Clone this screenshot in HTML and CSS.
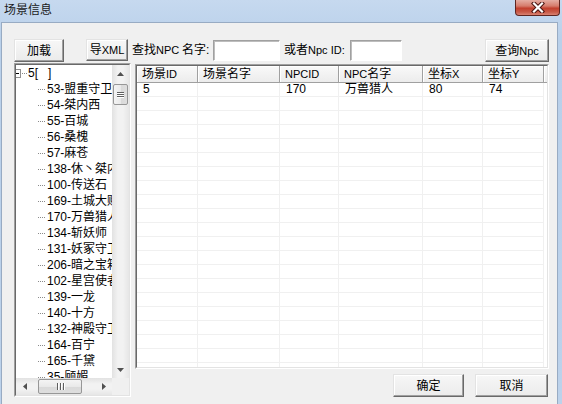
FILE: index.html
```html
<!DOCTYPE html>
<html lang="zh">
<head>
<meta charset="utf-8">
<title>场景信息</title>
<link rel="stylesheet" href="styles.css">
</head>
<body>
<div class="window">
  <div class="titlebar">
    <span class="title">场景信息</span>
    <div class="close">
      <svg width="14" height="11" viewBox="0 0 14 11">
        <path d="M3 1.5 L11 9.5 M11 1.5 L3 9.5" stroke="#4a1410" stroke-width="4.2" stroke-linecap="square"/>
        <path d="M3 1.5 L11 9.5 M11 1.5 L3 9.5" stroke="#ffffff" stroke-width="2.2" stroke-linecap="square"/>
      </svg>
    </div>
  </div>
  <div class="client">
    <div class="toolbar">
      <button class="btn btn-load">加载</button>
      <button class="btn btn-xml">导<span class="lat">XML</span></button>
      <span class="lbl lbl-find">查找<span class="lat">NPC</span></span>
      <span class="lbl lbl-name">名字:</span>
      <span class="input input-name"></span>
      <span class="lbl lbl-id">或者<span class="lat">Npc ID:</span></span>
      <span class="input input-id"></span>
      <button class="btn btn-query">查询<span class="lat">Npc</span></button>
    </div>
    <div class="main">
      <div class="tree">
        <div class="tree-in">
          <div class="tree-content">
            <div class="node root"><span class="toggle"></span><span class="dots dots-root"></span><span class="ntext">5[&nbsp;&nbsp;&nbsp;]</span></div>
            <div class="node"><span class="dots"></span><span class="ntext">53-盟重守卫</span></div>
            <div class="node"><span class="dots"></span><span class="ntext">54-桀内西</span></div>
            <div class="node"><span class="dots"></span><span class="ntext">55-百城</span></div>
            <div class="node"><span class="dots"></span><span class="ntext">56-桑槐</span></div>
            <div class="node"><span class="dots"></span><span class="ntext">57-麻苍</span></div>
            <div class="node"><span class="dots"></span><span class="ntext">138-休丶桀内西</span></div>
            <div class="node"><span class="dots"></span><span class="ntext">100-传送石</span></div>
            <div class="node"><span class="dots"></span><span class="ntext">169-土城大赌场</span></div>
            <div class="node"><span class="dots"></span><span class="ntext">170-万兽猎人</span></div>
            <div class="node"><span class="dots"></span><span class="ntext">134-斩妖师</span></div>
            <div class="node"><span class="dots"></span><span class="ntext">131-妖冢守卫</span></div>
            <div class="node"><span class="dots"></span><span class="ntext">206-暗之宝箱</span></div>
            <div class="node"><span class="dots"></span><span class="ntext">102-星宫使者</span></div>
            <div class="node"><span class="dots"></span><span class="ntext">139-一龙</span></div>
            <div class="node"><span class="dots"></span><span class="ntext">140-十方</span></div>
            <div class="node"><span class="dots"></span><span class="ntext">132-神殿守卫</span></div>
            <div class="node"><span class="dots"></span><span class="ntext">164-百宁</span></div>
            <div class="node"><span class="dots"></span><span class="ntext">165-千黛</span></div>
            <div class="node"><span class="dots"></span><span class="ntext">35-顾媚</span></div>
          </div>
          <div class="vscroll">
            <div class="sbtn"><svg width="7" height="4" viewBox="0 0 7 4"><path d="M0 4 L3.5 0 L7 4 Z" fill="#505050"/></svg></div>
            <div class="vtrack"><div class="vthumb"><i></i><i></i><i></i></div></div>
            <div class="sbtn"><svg width="7" height="4" viewBox="0 0 7 4"><path d="M0 0 L3.5 4 L7 0 Z" fill="#505050"/></svg></div>
          </div>
          <div class="hscroll">
            <div class="sbtn"><svg width="4" height="7" viewBox="0 0 4 7"><path d="M4 0 L0 3.5 L4 7 Z" fill="#505050"/></svg></div>
            <div class="htrack"><div class="hthumb"><i></i><i></i><i></i></div></div>
            <div class="sbtn"><svg width="4" height="7" viewBox="0 0 4 7"><path d="M0 0 L4 3.5 L0 7 Z" fill="#505050"/></svg></div>
          </div>
          <div class="corner"></div>
        </div>
      </div>
      <div class="right">
        <div class="list">
          <div class="list-in">
            <div class="lrow head">
              <div class="hc">场景<span class="lat">ID</span></div>
              <div class="hc">场景名字</div>
              <div class="hc"><span class="lat">NPCID</span></div>
              <div class="hc"><span class="lat">NPC</span>名字</div>
              <div class="hc">坐标<span class="lat">X</span></div>
              <div class="hc">坐标<span class="lat">Y</span></div>
              <div class="hc hc-end"></div>
            </div>
            <div class="lrow data">
              <div class="dc">5</div>
              <div class="dc"></div>
              <div class="dc">170</div>
              <div class="dc">万兽猎人</div>
              <div class="dc">80</div>
              <div class="dc">74</div>
            </div>
            <div class="lrow filler">
              <div class="fc"></div><div class="fc"></div><div class="fc"></div>
              <div class="fc"></div><div class="fc"></div><div class="fc"></div>
            </div>
          </div>
        </div>
        <div class="actions">
          <button class="btn btn-ok">确定</button>
          <button class="btn btn-cancel">取消</button>
        </div>
      </div>
    </div>
  </div>
</div>
</body>
</html>
```
FILE: styles.css
```css
* { box-sizing: border-box; }

body {
  margin: 0;
  width: 562px;
  height: 404px;
  overflow: hidden;
  font-family: "Liberation Sans", "Noto Sans CJK SC", sans-serif;
  font-size: 12px;
  color: #000;
}

.lat { font-size: 11px; }

.window {
  width: 562px;
  height: 404px;
  display: flex;
  flex-direction: column;
  background: linear-gradient(to bottom, #c6d9ef, #b9d0ea 40px, #bcd2eb);
  overflow: hidden;
}

.titlebar {
  height: 22px;
  flex: none;
  display: flex;
  align-items: flex-start;
}

.title {
  padding-left: 4px;
  line-height: 20px;
  font-size: 12px;
  color: #1a1a1a;
}

.close {
  margin-left: auto;
  margin-right: 2px;
  width: 45px;
  height: 16px;
  border: 1px solid #5e2520;
  border-top: none;
  border-radius: 0 0 4px 4px;
  background: linear-gradient(to bottom, #e5ada3, #d67c6c 40%, #c2402e 55%, #c85a48 80%, #d98272);
  display: flex;
  align-items: center;
  justify-content: center;
}

.close svg { display: block; }

.client {
  flex: 1;
  margin: 0 4px 0 1px;
  border: 1px solid #98abc3;
  border-bottom: none;
  background: #f0f0f0;
  padding: 16px 8px 0 12px;
  display: flex;
  flex-direction: column;
}

/* toolbar */
.toolbar {
  display: flex;
  align-items: flex-start;
  height: 23px;
  flex: none;
}

.btn {
  font: inherit;
  color: #000;
  padding: 0;
  margin: 0;
  height: 23px;
  background: linear-gradient(to bottom, #f7f7f7, #ebebeb);
  border: 1px solid;
  border-color: #e3e3e3 #696969 #696969 #e3e3e3;
  box-shadow: inset -1px -1px 0 #a0a0a0, inset 1px 1px 0 #ffffff;
  line-height: 20px;
  text-align: center;
  white-space: nowrap;
}

.btn-load { width: 50px; }
.btn-xml { width: 42px; height: 22px; margin-left: 22px; line-height: 19px; }
.btn-query { width: 64px; margin-left: auto; }

.lbl {
  line-height: 23px;
  white-space: nowrap;
}
.lbl-find { width: 50px; margin-left: 4px; }
.lbl-name { width: 31px; }
.lbl-id { width: 66px; margin-left: 4px; }

.input {
  display: block;
  height: 21px;
  margin-top: 1px;
  background: #fff;
  border: 1px solid;
  border-color: #a0a0a0 #ffffff #ffffff #a0a0a0;
  box-shadow: inset 1px 1px 0 #bdbdbd;
}
.input-name { width: 67px; }
.input-id { width: 52px; }

/* main */
.main {
  display: flex;
  margin-top: 1px;
  flex: 1;
  min-height: 0;
}

/* tree */
.tree {
  width: 117px;
  height: 334px;
  flex: none;
  border: 1px solid;
  border-color: #a0a0a0 #ffffff #ffffff #a0a0a0;
}

.tree-in {
  width: 100%;
  height: 100%;
  border: 1px solid;
  border-color: #696969 #e3e3e3 #e3e3e3 #696969;
  background: #fff;
  display: grid;
  grid-template-columns: 1fr 17px;
  grid-template-rows: 1fr 17px;
}

.tree-content {
  overflow: hidden;
}

.node {
  height: 16px;
  display: flex;
  align-items: center;
  white-space: nowrap;
  padding-left: 22px;
}

.node.root { padding-left: 0; }

.ntext { line-height: 16px; }

.dots {
  width: 7px;
  margin-right: 2px;
  flex: none;
  border-top: 1px dotted #8a8a8a;
}

.dots-root {
  width: 5px;
  margin-left: 1px;
  margin-right: 1px;
}

.toggle {
  width: 9px;
  height: 9px;
  flex: none;
  margin-left: -4px;
  border: 1px solid #919191;
  background: #fff;
  position: relative;
}
.toggle::after {
  content: "";
  position: absolute;
  left: 1px;
  top: 3px;
  width: 5px;
  height: 1px;
  background: #000;
}

/* scrollbars */
.vscroll {
  display: flex;
  flex-direction: column;
  background: linear-gradient(to right, #e2e2e2, #f2f2f2 35%, #f2f2f2 65%, #e6e6e6);
}

.sbtn {
  width: 17px;
  height: 17px;
  flex: none;
  display: flex;
  align-items: center;
  justify-content: center;
}
.sbtn svg { display: block; }

.vtrack { flex: 1; }

.vthumb {
  margin: 2px 1px 0;
  height: 21px;
  border: 1px solid #979797;
  border-radius: 2px;
  background: linear-gradient(to right, #f4f4f4, #e9e9e9 50%, #d9d9d9 51%, #dedede);
  display: flex;
  flex-direction: column;
  align-items: center;
  justify-content: center;
  gap: 1px;
}
.vthumb i {
  display: block;
  width: 7px;
  height: 1px;
  background: #5f5f5f;
  box-shadow: 0 1px 0 #ffffff;
}

.hscroll {
  display: flex;
  background: linear-gradient(to bottom, #e2e2e2, #f2f2f2 35%, #f2f2f2 65%, #e6e6e6);
}

.htrack { flex: 1; }

.hthumb {
  margin: 1px 0 0 5px;
  width: 44px;
  height: 15px;
  border: 1px solid #979797;
  border-radius: 2px;
  background: linear-gradient(to bottom, #f4f4f4, #e9e9e9 50%, #d9d9d9 51%, #dedede);
  display: flex;
  align-items: center;
  justify-content: center;
  gap: 2px;
}
.hthumb i {
  display: block;
  width: 1px;
  height: 7px;
  background: #5f5f5f;
  box-shadow: 1px 0 0 #ffffff;
}

.corner { background: #f0f0f0; }

/* right column */
.right {
  width: 414px;
  margin-left: 4px;
  margin-top: 1px;
  display: flex;
  flex-direction: column;
}

.list {
  height: 305px;
  border: 1px solid;
  border-color: #a0a0a0 #ffffff #ffffff #a0a0a0;
}

.list-in {
  height: 100%;
  border: 1px solid;
  border-color: #696969 #e3e3e3 #e3e3e3 #696969;
  background: #fff;
  display: flex;
  flex-direction: column;
  overflow: hidden;
}

.lrow {
  display: grid;
  grid-template-columns: 61px 82px 59px 84px 60px 61px 1fr;
}

.head {
  height: 17px;
  flex: none;
  background: linear-gradient(to bottom, #f9f9f9, #ececec);
  border-bottom: 1px solid #a0a0a0;
}

.hc {
  padding-left: 5px;
  line-height: 16px;
  white-space: nowrap;
  border-right: 1px solid #a0a0a0;
  box-shadow: inset 1px 1px 0 #ffffff;
}
.hc-end { border-right: none; }

.data {
  height: 14px;
  flex: none;
}

.dc {
  padding-left: 6px;
  line-height: 13px;
  white-space: nowrap;
  border-right: 1px solid #f0f0f0;
  border-bottom: 1px solid #f0f0f0;
}

.filler {
  flex: 1;
}

.fc {
  border-right: 1px solid #f0f0f0;
  background: repeating-linear-gradient(to bottom, transparent 0, transparent 13px, #f0f0f0 13px, #f0f0f0 14px);
}

.actions {
  display: flex;
  justify-content: flex-end;
  gap: 11px;
  margin-top: 5px;
  padding-right: 1px;
}

.btn-ok { width: 71px; }
.btn-cancel { width: 73px; }
```
